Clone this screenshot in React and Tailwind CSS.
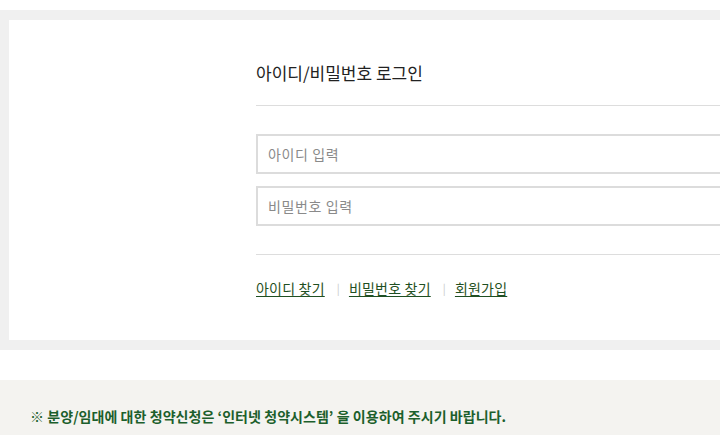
import React from 'react';

const font = { fontFamily: '"Noto Sans CJK KR", "Noto Sans", sans-serif' };

function LoginLinks() {
  return (
    <div className="mt-[23px] flex items-center text-[14px] leading-[20px] tracking-[0.2px] text-[#1f4f22]">
      <a href="#" className="underline underline-offset-2">아이디 찾기</a>
      <span className="ml-[12px] mr-[9px] text-[11px] text-[#c8c8c8]">|</span>
      <a href="#" className="underline underline-offset-2">비밀번호 찾기</a>
      <span className="ml-[12px] mr-[9px] text-[11px] text-[#c8c8c8]">|</span>
      <a href="#" className="underline underline-offset-2">회원가입</a>
    </div>
  );
}

export default function App() {
  return (
    <div className="w-[720px] h-[435px] overflow-hidden bg-white" style={font}>
      <div className="h-[10px]" />

      {/* Login box */}
      <div className="bg-[#f0f0f0] py-[10px] pl-[9px]">
        <div className="flex h-[320px] overflow-hidden bg-white">
          <div className="w-[247px] shrink-0" />
          <div className="w-[520px] shrink-0 pt-[40px]">
            <h2 className="border-b border-[#dddddd] pb-[20px] text-[17px] leading-[25px] font-normal text-[#222]">
              아이디/비밀번호 로그인
            </h2>

            <div className="mt-[28px] flex flex-col gap-[12px]">
              <input
                type="text"
                placeholder="아이디 입력"
                className="h-[40px] w-full border-2 border-[#dcdcdc] px-[10px] text-[14px] tracking-[0.6px] text-[#333] placeholder:text-[#8a8a8a] outline-none"
              />
              <input
                type="password"
                placeholder="비밀번호 입력"
                className="h-[40px] w-full border-2 border-[#dcdcdc] px-[10px] text-[14px] tracking-[0.6px] text-[#333] placeholder:text-[#8a8a8a] outline-none"
              />
            </div>

            <div className="mt-[28px] border-t border-[#dddddd]" />
            <LoginLinks />
          </div>
        </div>
      </div>

      <div className="h-[30px]" />

      {/* Notice */}
      <div className="h-[55px] bg-[#f4f3f0] px-[30px] pt-[26px]">
        <p className="text-[14px] leading-[20px] font-bold tracking-[0.05px] text-[#1c5f2c]">
          ※ 분양/임대에 대한 청약신청은 ‘인터넷 청약시스템’ 을 이용하여 주시기 바랍니다.
        </p>
      </div>
    </div>
  );
}
